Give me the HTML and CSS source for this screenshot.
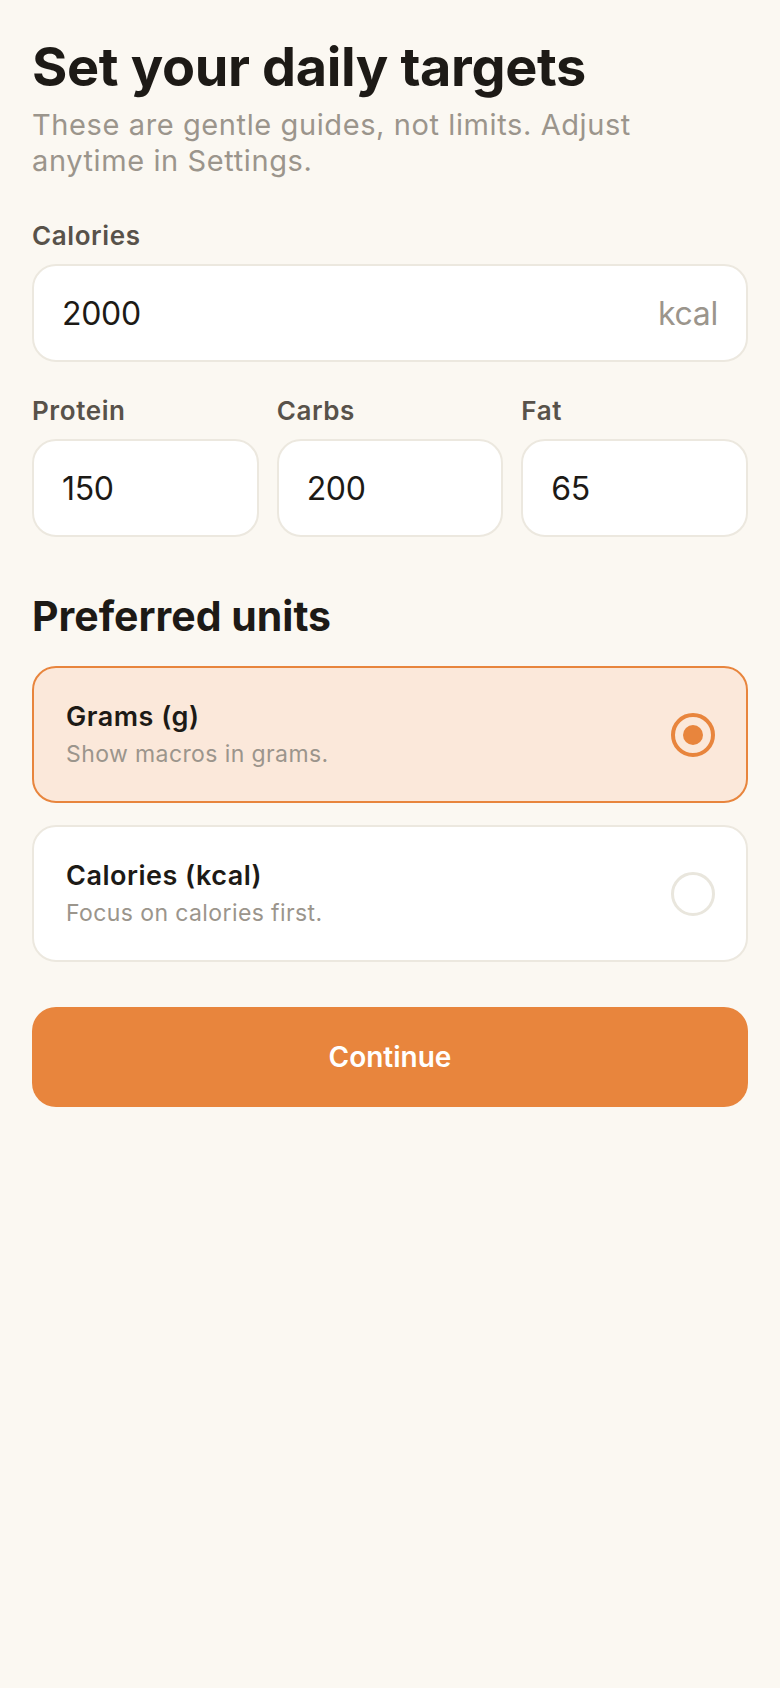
FILE: index.html
```html
<!DOCTYPE html>
<html lang="en">
<head>
<meta charset="utf-8">
<meta name="viewport" content="width=device-width, initial-scale=1">
<title>Set your daily targets</title>
<link rel="stylesheet" href="styles.css">
</head>
<body>
<main class="page">
  <header class="intro">
    <h1 class="title">Set your daily targets</h1>
    <p class="subtitle">These are gentle guides, not limits. Adjust anytime in Settings.</p>
  </header>

  <section class="field">
    <label class="field-label">Calories</label>
    <div class="input">
      <span class="input-value">2000</span>
      <span class="input-unit">kcal</span>
    </div>
  </section>

  <section class="macros">
    <div class="field">
      <label class="field-label">Protein</label>
      <div class="input"><span class="input-value">150</span></div>
    </div>
    <div class="field">
      <label class="field-label">Carbs</label>
      <div class="input"><span class="input-value">200</span></div>
    </div>
    <div class="field">
      <label class="field-label">Fat</label>
      <div class="input"><span class="input-value">65</span></div>
    </div>
  </section>

  <h2 class="section-title">Preferred units</h2>

  <div class="options">
    <div class="option option-selected">
      <div class="option-text">
        <div class="option-title">Grams (g)</div>
        <div class="option-desc">Show macros in grams.</div>
      </div>
      <span class="radio radio-on"><span class="radio-dot"></span></span>
    </div>
    <div class="option">
      <div class="option-text">
        <div class="option-title">Calories (kcal)</div>
        <div class="option-desc">Focus on calories first.</div>
      </div>
      <span class="radio"></span>
    </div>
  </div>

  <button class="cta" type="button">Continue</button>
</main>
</body>
</html>
```

FILE: styles.css
```css
* { box-sizing: border-box; }

html, body {
  margin: 0;
  padding: 0;
  background: #fbf8f2;
}

body {
  font-family: Inter, "Noto Sans", "Liberation Sans", sans-serif;
  color: #1d1a16;
  min-height: 1688px;
}

.page {
  padding: 34px 32px 40px;
  display: flex;
  flex-direction: column;
}

.intro {
  display: flex;
  flex-direction: column;
  gap: 8px;
}

.title {
  margin: 0;
  font-size: 54px;
  line-height: 65px;
  font-weight: 700;
  letter-spacing: -0.35px;
  color: #1d1a16;
}

.subtitle {
  margin: 0;
  font-size: 29px;
  line-height: 36px;
  font-weight: 400;
  letter-spacing: 0.6px;
  color: #9b958c;
}

.field {
  display: flex;
  flex-direction: column;
  gap: 12px;
  margin-top: 40px;
}

.field-label {
  font-size: 26px;
  line-height: 33px;
  font-weight: 600;
  letter-spacing: 0.6px;
  color: #58524a;
}

.input {
  height: 98px;
  background: #ffffff;
  border: 2px solid #ece8df;
  border-radius: 24px;
  padding: 0 28px;
  display: flex;
  align-items: center;
  justify-content: space-between;
  font-size: 32px;
  letter-spacing: -0.3px;
}

.input-value {
  color: #1d1a16;
}

.input-unit {
  color: #9b958c;
}

.macros {
  display: grid;
  grid-template-columns: repeat(3, 1fr);
  gap: 18px;
}

.macros .field {
  margin-top: 32px;
}

.section-title {
  margin: 55px 0 0;
  font-size: 41px;
  line-height: 48px;
  font-weight: 700;
  letter-spacing: 0;
  color: #1d1a16;
}

.options {
  display: flex;
  flex-direction: column;
  gap: 22px;
  margin-top: 26px;
}

.option {
  height: 137px;
  background: #ffffff;
  border: 2px solid #ece8df;
  border-radius: 24px;
  padding: 0 31px 0 32px;
  display: flex;
  align-items: center;
  justify-content: space-between;
}

.option-selected {
  background: #fbe8da;
  border-color: #e8853d;
}

.option-text {
  display: flex;
  flex-direction: column;
  gap: 5px;
}

.option-title {
  font-size: 27px;
  line-height: 34px;
  font-weight: 600;
  letter-spacing: 0.5px;
  color: #1d1a16;
}

.option-desc {
  font-size: 23px;
  line-height: 30px;
  letter-spacing: 0.4px;
  color: #9b958c;
}

.radio {
  width: 44px;
  height: 44px;
  border-radius: 50%;
  border: 3px solid #e9e6dd;
  display: flex;
  align-items: center;
  justify-content: center;
  flex: none;
}

.radio-on {
  border: 4px solid #e8853d;
}

.radio-dot {
  width: 20px;
  height: 20px;
  border-radius: 50%;
  background: #e8853d;
}

.cta {
  margin-top: 45px;
  height: 100px;
  border: none;
  border-radius: 24px;
  background: #e8853d;
  color: #ffffff;
  font-family: inherit;
  font-size: 28px;
  font-weight: 600;
  cursor: pointer;
}
```
